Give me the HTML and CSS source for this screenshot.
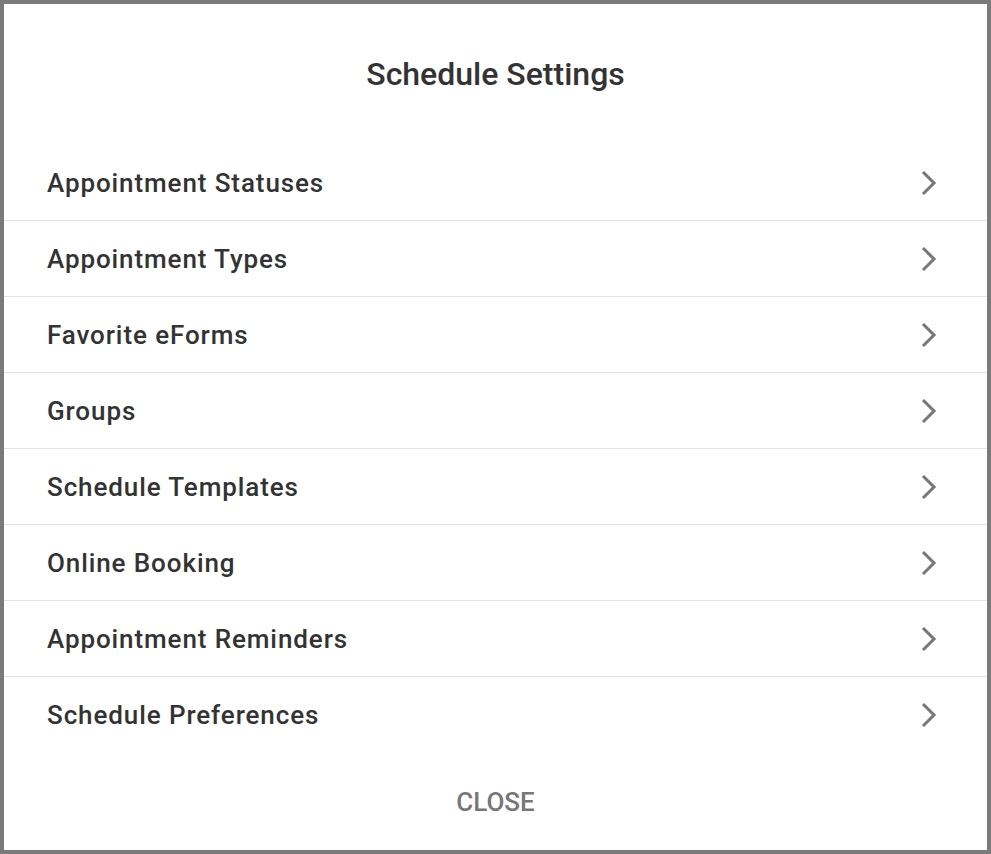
FILE: index.html
```html
<!DOCTYPE html>
<html>
<head>
    <title>Schedule Settings</title>
    <meta name="viewport" content="width=device-width, initial-scale=1.0">
    <link rel="stylesheet" href="styles.css">
</head>
<body>
    <div class="dialog">
        <h1 class="dialog-title">Schedule Settings</h1>

        <ul class="settings-list">
            <li class="settings-item"><span>Appointment Statuses</span><svg class="chevron" viewBox="0 0 16 26"><path d="M2 2 L13 13 L2 24"/></svg></li>
            <li class="settings-item"><span>Appointment Types</span><svg class="chevron" viewBox="0 0 16 26"><path d="M2 2 L13 13 L2 24"/></svg></li>
            <li class="settings-item"><span>Favorite eForms</span><svg class="chevron" viewBox="0 0 16 26"><path d="M2 2 L13 13 L2 24"/></svg></li>
            <li class="settings-item"><span>Groups</span><svg class="chevron" viewBox="0 0 16 26"><path d="M2 2 L13 13 L2 24"/></svg></li>
            <li class="settings-item"><span>Schedule Templates</span><svg class="chevron" viewBox="0 0 16 26"><path d="M2 2 L13 13 L2 24"/></svg></li>
            <li class="settings-item"><span>Online Booking</span><svg class="chevron" viewBox="0 0 16 26"><path d="M2 2 L13 13 L2 24"/></svg></li>
            <li class="settings-item"><span>Appointment Reminders</span><svg class="chevron" viewBox="0 0 16 26"><path d="M2 2 L13 13 L2 24"/></svg></li>
            <li class="settings-item"><span>Schedule Preferences</span><svg class="chevron" viewBox="0 0 16 26"><path d="M2 2 L13 13 L2 24"/></svg></li>
        </ul>

        <div class="dialog-actions">
            <button class="close-btn">CLOSE</button>
        </div>
    </div>
</body>
</html>
```

FILE: styles.css
```css
/* Base styles */
* {
    box-sizing: border-box;
    margin: 0;
    padding: 0;
}

body {
    font-family: Roboto, 'Liberation Sans', sans-serif;
    background-color: #7a7a7a;
    color: #333;
}

.dialog {
    width: 991px;
    height: 854px;
    border: 4px solid #7a7a7a;
    background-color: #fff;
    display: flex;
    flex-direction: column;
}

.dialog-title {
    font-size: 32px;
    font-weight: 500;
    line-height: 36px;
    text-align: center;
    color: #333;
    padding: 52px 0 53px;
}

/* List of settings */
.settings-list {
    list-style: none;
}

.settings-item {
    height: 76px;
    padding: 0 50px 0 43px;
    display: flex;
    align-items: center;
    justify-content: space-between;
    font-size: 26px;
    font-weight: 500;
    letter-spacing: 0.9px;
    color: #333;
    border-bottom: 1px solid #e4e4e4;
    cursor: pointer;
}

.settings-item:last-child {
    border-bottom: none;
}

.chevron {
    width: 16px;
    height: 26px;
    fill: none;
    stroke: #777;
    stroke-width: 3;
}

/* Footer */
.dialog-actions {
    flex: 1;
    display: flex;
    justify-content: center;
    align-items: center;
}

.close-btn {
    background: none;
    border: none;
    font-family: inherit;
    font-size: 26px;
    font-weight: 500;
    color: #777;
    cursor: pointer;
}
```
